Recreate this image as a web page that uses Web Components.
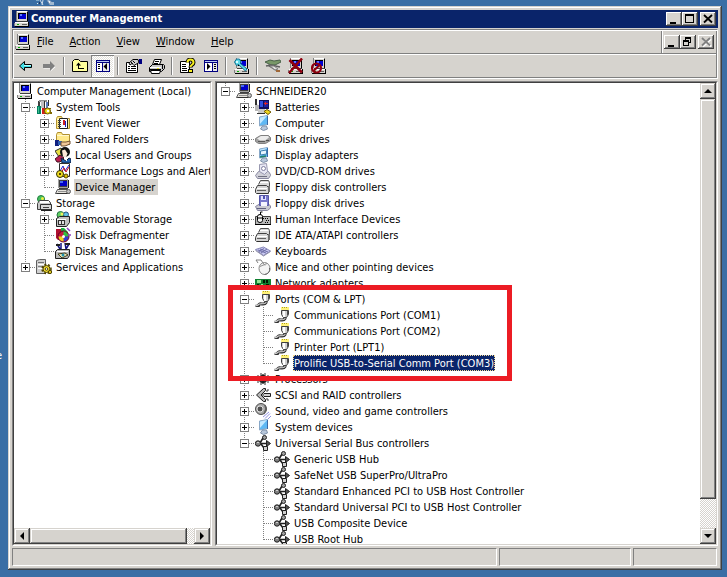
<!DOCTYPE html>
<html lang="en">
<head>
<meta charset="utf-8">
<title>Computer Management</title>
<style>
html,body{height:100%;margin:0}
body{background:#3a6ea5;color:#000;font:11px/16px "DejaVu Sans Condensed","DejaVu Sans",sans-serif;
  --face:#d6d3ce;--light:#fff;--shade:#808080;--dark:#404040;--navy:#0a246a;overflow:hidden}
</style>
</head>
<body>
<desk-top>
  <app-window>
    <title-bar slot="title" text="Computer Management"></title-bar>
    <menu-bar slot="menu"></menu-bar>
    <tool-bar slot="tools"></tool-bar>
    <tree-pane slot="left" name="Console tree" scroll="x">
      <tree-item root icon="pc" label="Computer Management (Local)">
        <tree-item icon="tools" label="System Tools" state="open">
          <tree-item icon="event" label="Event Viewer" state="closed"></tree-item>
          <tree-item icon="shared" label="Shared Folders" state="closed"></tree-item>
          <tree-item icon="users" label="Local Users and Groups" state="closed"></tree-item>
          <tree-item icon="perf" label="Performance Logs and Alerts" state="closed"></tree-item>
          <tree-item icon="device" label="Device Manager" selected="idle"></tree-item>
        </tree-item>
        <tree-item icon="storage" label="Storage" state="open">
          <tree-item icon="removable" label="Removable Storage" state="closed"></tree-item>
          <tree-item icon="defrag" label="Disk Defragmenter"></tree-item>
          <tree-item icon="diskmgmt" label="Disk Management"></tree-item>
        </tree-item>
        <tree-item icon="services" label="Services and Applications" state="closed"></tree-item>
      </tree-item>
    </tree-pane>
    <tree-pane slot="right" name="Devices" scroll="y">
      <tree-item icon="device" label="SCHNEIDER20" state="open">
        <tree-item icon="battery" label="Batteries" state="closed"></tree-item>
        <tree-item icon="monitor" label="Computer" state="closed"></tree-item>
        <tree-item icon="disk" label="Disk drives" state="closed"></tree-item>
        <tree-item icon="display" label="Display adapters" state="closed"></tree-item>
        <tree-item icon="dvd" label="DVD/CD-ROM drives" state="closed"></tree-item>
        <tree-item icon="ctrl" label="Floppy disk controllers" state="closed"></tree-item>
        <tree-item icon="floppy" label="Floppy disk drives" state="closed"></tree-item>
        <tree-item icon="hid" label="Human Interface Devices" state="closed"></tree-item>
        <tree-item icon="ctrl" label="IDE ATA/ATAPI controllers" state="closed"></tree-item>
        <tree-item icon="keyboard" label="Keyboards" state="closed"></tree-item>
        <tree-item icon="mouse" label="Mice and other pointing devices" state="closed"></tree-item>
        <tree-item icon="net" label="Network adapters" state="closed"></tree-item>
        <tree-item icon="port" label="Ports (COM &amp; LPT)" state="open">
          <tree-item icon="port" label="Communications Port (COM1)"></tree-item>
          <tree-item icon="port" label="Communications Port (COM2)"></tree-item>
          <tree-item icon="port" label="Printer Port (LPT1)"></tree-item>
          <tree-item icon="port" label="Prolific USB-to-Serial Comm Port (COM3)" selected="active"></tree-item>
        </tree-item>
        <tree-item icon="cpu" label="Processors" state="closed"></tree-item>
        <tree-item icon="scsi" label="SCSI and RAID controllers" state="closed"></tree-item>
        <tree-item icon="sound" label="Sound, video and game controllers" state="closed"></tree-item>
        <tree-item icon="monitor" label="System devices" state="closed"></tree-item>
        <tree-item icon="usb" label="Universal Serial Bus controllers" state="open">
          <tree-item icon="usb" label="Generic USB Hub"></tree-item>
          <tree-item icon="usb" label="SafeNet USB SuperPro/UltraPro"></tree-item>
          <tree-item icon="usb" label="Standard Enhanced PCI to USB Host Controller"></tree-item>
          <tree-item icon="usb" label="Standard Universal PCI to USB Host Controller"></tree-item>
          <tree-item icon="usb" label="USB Composite Device"></tree-item>
          <tree-item icon="usb" label="USB Root Hub"></tree-item>
        </tree-item>
      </tree-item>
      <callout-frame slot="overlay"></callout-frame>
    </tree-pane>
    <status-bar slot="status"></status-bar>
  </app-window>
</desk-top>
<script>
const R=(x,y,w,h,f)=>`<rect x="${x}" y="${y}" width="${w}" height="${h}" fill="${f}"/>`;
const P=(d,f,s,w=1)=>`<path fill-rule="evenodd" d="${d}" fill="${f||'none'}"${s?` stroke="${s}" stroke-width="${w}"`:''}/>`;
const C=(x,y,r,f,s)=>`<circle cx="${x}" cy="${y}" r="${r}" fill="${f}"${s?` stroke="${s}"`:''}/>`;
const PC=R(2,0,12,10,'#808080')+R(3,1,11,9,'#d6d3ce')+R(3,0,10,1,'#fff')+R(13,1,1,10,'#000')+R(4,2,8,6,'#000')+R(5,3,7,5,'#0000d0')+R(6,3,2,2,'#5a7bff')
  +R(3,10,11,1,'#404040')+R(1,11,13,4,'#d6d3ce')+R(1,11,13,1,'#fff')+R(0,12,1,3,'#808080')+R(14,11,1,4,'#000')+R(1,15,14,1,'#000')+R(3,13,2,1,'#00b000')+R(8,13,5,1,'#606060');
const DEV=R(3,0,10,9,'#a0a0a0')+R(4,0,8,1,'#dcdcdc')+R(4,1,8,7,'#404040')+R(5,2,7,5,'#0000c8')+R(5,2,3,2,'#4a6cf0')+R(13,1,1,8,'#202020')+R(4,9,9,1,'#404040')
  +P('M2.5 10.5h10l2 4H.5z','#e4e2dc','#505050')+R(3,12,8,1,'#909090')+R(2,14,12,1,'#303030')+C(13.5,12.5,2,'#c0c0c0','#606060');
const FOLD=P('M1.5 13.5v-10l1-2h4l1 2h7v10z','#ffe98a','#b09030')+R(2,4,12,1,'#fff8d0');
const MON=P('M4.5 2l8-1.500v9l-8 1.500z','#5eb8f4','#88a8c8')+P('M5 2.500l7-1.500-7 8z','#c4e8ff')+P('M12.500 1v9','','#3868a8')+P('M7.500 11h4l1 3-4 1.500-3-1.500z','#b8c8dc','#7f90a8');
const CTRL=P('M3.5 5.500l2-4h8l1 2v4h-2','#d8d8d8','#505050')+R(5,3,8,1,'#fff')+P('M.5 10.500l2-4h9l2 2v6h-12l-1-1z','#d4d4d4','#404040')+R(2,9,10,1,'#fff')+R(2,11,9,1,'#606060')+R(13,7,2,6,'#707070')+R(2,14,11,1,'#303030');
const SHADES={
pc:PC,device:DEV,
tools:R(2,2,2,7,'#404040')+R(1,7,4,8,'#008060')+R(2,8,1,6,'#40c090')+R(3,1,8,2,'#909090')+R(5,2,3,7,'#c0c0c0')+R(8,2,1,7,'#303030')+R(6,9,3,6,'#d02020')+R(9,9,1,6,'#600000')+R(10,3,2,6,'#6080c0')+R(12,1,1,6,'#303030')+C(11.5,12,3,'#f0dc20','#6a5800')+R(11,11,2,2,'#fff')+R(14,13,2,2,'#806800')+R(13,9,2,1,'#806800'),
event:FOLD+R(5,3,8,10,'#fff')+P('M4.5 3.5h8v10h-8z','none','#202020')+R(3,5,3,1,'#404040')+R(3,7,3,1,'#404040')+R(3,9,3,1,'#404040')+R(3,11,3,1,'#404040')+R(8,5,2,5,'#d02020')+R(10,6,1,6,'#2020c0'),
shared:FOLD+R(0,9,4,6,'#102080')+R(3,10,4,4,'#3060b0')+P('M6 11h5l4-1v3l-5 2H6z','#f0c898','#705030'),
users:P('M0 4l6-3 3 6-5 3z','#e8e040','#303030')+C(10,5,5,'#101010')+P('M7 3.500l3-1 2.500 4-1.500 4-3-1z','#fce8d8')+P('M0 12l5-4 4 3-4 4H2z','#b82050','#401020')+P('M6 11l5 3 3-3 2 1v4H7z','#2060b0','#102040')+P('M9 11l3 3','','#fff'),
perf:P('M4.5.5h10v13h-10z','#fff','#303030')+P('M5 8l3-5 2 5 4-6','','#2020d0')+P('M6 10l3-5 2 4 3-5','','#d01020')+C(5,11,3.5,'#f0dc20','#303000')+R(4,10,2,2,'#504000')+C(11,13,2,'#d8c000','#504000'),
storage:C(5,4,3.5,'#48c060','#208040')+C(6.500,3.500,1.500,'#f0f040')+P('M1.500 8.500l2-3h9l2 2v7h-13z','#c8c8c8','#404040')+R(4,6,9,2,'#fff')+P('M4.500 9.500h11v5h-11z','#d8d8d8','#303030')+R(7,12,6,1,'#404040')+R(5,15,11,1,'#202020'),
removable:C(5.500,4,3.5,'#60d060','#207040')+C(11,3.500,2.500,'#60c0e0','#205080')+C(7,3,1.500,'#f0f060')+P('M1.5 7.5l3-2h10v6l-3 4h-10z','#c0c0c0','#202020')+R(3,9,7,5,'#303030')+R(4,10,2,3,'#e0e0e0')+R(7,10,2,3,'#e0e0e0')+R(2,8,9,1,'#fff'),
defrag:P('M1 2h5v11H3L1 11z','#b01030')+P('M6 1h3l4 4v4H6z','#20b040')+C(8.500,9.500,5.500,'#c81840','#600020')+P('M8.500 9.500V4.500a5 5 0 0 1 5 5z','#30c040')+P('M8.500 9.500h5a5 5 0 0 1-5 5z','#3040d0')+P('M8.500 9.500v5a5 5 0 0 1-5-5z','#f0d020')+C(8.500,9.500,1.5,'#fff')+P('M12 1l3 3M13 8h3','','#9040c0',1.500),
diskmgmt:P('M2 1l3 5M6 0v6M10 0l1 6M14 1l-3 5','','#101080',1.5)+R(1,1,4,2,'#202020')+R(10,0,5,2,'#202020')+P('M.5 8.5l2-2h12v6l-2 3h-12z','#b8b8b8','#202020')+R(2,8,11,1,'#fff')+P('M3 11l4 4 6-3-3-2z','#f0e8b0','#404020')+C(8,12,1.5,'#2090b0'),
services:P('M.5 1.5l3-1h6v14h-9z','#d0d0d0','#606060')+R(2,3,6,1,'#707070')+R(2,5,6,1,'#fff')+R(2,7,6,1,'#808080')+R(2,9,4,1,'#fff')+`<circle cx="10.500" cy="10" r="3.500" fill="#f0dc30" stroke="#504400"/><circle cx="10.500" cy="10" r="4.500" fill="none" stroke="#504400" stroke-width="1.500" stroke-dasharray="2 1.700"/>`+C(10.5,10,1.3,'#fff','#504400')+C(14,13,1.700,'#d8c420','#504400'),
battery:P('M1 0v6l3 2v5h6','','#303030',2)+R(0,6,5,6,'#b8b8b8')+R(4,1,10,9,'#101060')+R(5,2,3,6,'#3050e0')+R(9,2,4,6,'#2020a0')+R(9,4,4,1,'#e02020')+R(10,3,1,3,'#e02020')+R(3,10,7,4,'#c8c8c8')+R(2,14,8,1,'#303030')+P('M9 12.500l3-2 4 2.500-3 2.500z','#f0d820','#705800'),
monitor:MON,
disk:P('M.5 7.500l5-3h8l2 2v3l-5 3h-7l-3-2z','#a0a0a0','#808080')+P('M2 7.500l4-2.500h7l1 1.500-4 3H5z','#ececec')+R(3,10,7,1,'#585858')+R(11,9,3,1,'#505050'),
display:MON+P('M5.500 4l6-1v4l-6 1z','#e8f6ff','#4080b0')+P('M5 10l6-1','','#208068',1.500),
dvd:P('M.5 12.500l3-4h10l2 3v1l-2 3h-11z','#d0d0d8','#8888a0')+P('M4.500 1.500l7-1 1 8-3 3-5-3z','#e8e8f4','#9898b0')+C(8.500,5.500,2,'#fff','#8080a0')+R(3,13,9,1,'#707080'),
ctrl:CTRL,
floppy:P('M.5 11.500l4-2.500h9l2 2v2l-3 2.500h-10z','#c8c8d0','#8888a0')+P('M4.500.500h9v10h-9z','#7878cc','#5858a8')+R(6,1,5,4,'#e0e0ff')+R(8,1,2,3,'#5050b0')+R(6,7,6,4,'#f4f4ff')+R(2,13,9,1,'#606080'),
hid:P('M.5 5.5h15v8H.5z','#b8b8b8','#404040')+R(8,7,1,1,'#000')+R(10,7,1,1,'#000')+R(12,7,1,1,'#000')+R(11,9,1,1,'#000')+R(13,9,1,1,'#000')+R(10,11,1,1,'#000')+R(12,11,1,1,'#000')+R(0,13,16,1,'#000')+P('M2.500 5.500q0-2 2.500-2t2.500 2v4q0 2-2.500 2t-2.500-2z','#f4f4f4','#000')+P('M5.500 4V1h2M3 7h4','','#000'),
keyboard:P('M.5 6.500l8-2.500 7 4-7 4.500z','#c8c8f0','#8888b8')+P('M3 7l8 3M5 6l8 3M6 10l6-4M4 8.500l5-3','','#7070a8')+P('M.5 7.500l8 5.500 7-4.500','','#9090a8'),
mouse:P('M3 4L1 1h5l2 3','','#808080')+`<ellipse cx="9.500" cy="9.500" rx="5.500" ry="6" fill="#f4f4f4" stroke="#888"/>`+P('M5 7.500l7-3M8 4l2 2.500','','#909090')+P('M14.500 9c1 4-2 6-5 6.500','','#606060'),
net:R(0,4,16,9,'#108030')+R(2,5,4,3,'#90e090')+R(8,5,2,3,'#001800')+R(11,5,2,3,'#001800')+R(2,9,2,3,'#002000')+R(6,9,2,3,'#90e090')+R(11,9,3,3,'#002000'),
port:P('M11 9v2.500q-1 2-4 1.500-3 -.5-3 .5 0 2-3.500 1.800','','#303030',3)+P('M11 9v2.500q-1 1.500-4 1.200-3.500 0-3.500 1-.5 1-3 1','','#c8c8c8',1.200)+R(7,0,8,3,'#fff27a')+R(8,0,1,1,'#b0a020')+R(10,0,1,1,'#b0a020')+R(12,0,1,1,'#b0a020')+P('M7.5 3.5h7v4l-2 3h-3l-2-3z','#d0d0d0','#404040')+R(9,4,2,6,'#fff')+R(13,4,1,4,'#505050'),
cpu:P('M8 3l7 5-7 5-7-5z','#202020')+P('M3 4v8M6 2v12M10 2v12M13 4v8','','#303030'),
scsi:P('M8.500 1.500L1.500 8l7 6.500h2v-2L6 8l4.500-4.500v-2z','#b8b8b8','#202020')+P('M9 6.5h6.500v3H9L7.500 8z','#d0d0d0','#202020')+P('M11 4h2v-2M11 12h2v2','','#404040'),
sound:C(6,6,5.500,'#a8a8a8','#505050')+C(5,6,3,'#505050','#e0e0e0')+P('M10 2l1 4-2 5','','#606060',1.500)+P('M8 14l6-5M10 15.500l5-5M13 16l3-3','','#9090e0'),
usb:P('M2 8.5h11M5 8l3-5h2M6 9l3 4h2','','#202020',1.6)+C(3,8.5,2.700,'#808080','#202020')+R(2,7,2,1,'#d0d0d0')+C(9.500,2.500,2,'#a0a0a0','#202020')+P('M8.500 11.500h4v4h-4z','#d0d0d0','#202020')+P('M11.500 5.5l4 3-4 3z','#505050','#202020'),
back:P('M1.500 8l5-4.500v3h7v3h-7v3z','#40e0e8','#000')+R(6,7,7,1,'#b0ffff'),
fwd:P('M14.500 9L9.500 4.500v3H2.500v3h7v3z','#fff')+P('M14 8L9 3v3H2v4h7v3z','#808080'),
up:P('M.5 13.500v-10l2-2h4l2 2h7v10z','#ffff9c','#000')+P('M4 7.500l2.500-3 2.500 3zM6 7h1v4h5v-1H7z','#000')+R(6,7,1,4,'#000')+R(6,10,6,1,'#000'),
tree:R(1,2,14,12,'#000080')+R(2,5,5,8,'#fff')+R(8,5,6,8,'#e8e8e8')+R(2,3,12,1,'#b8c8f0')+R(3,6,2,1,'#000')+R(3,8,2,1,'#000')+R(3,10,2,1,'#000')+P('M12 5v7L8.500 8.500z','#000'),
action:R(1,2,14,12,'#000080')+R(2,5,7,8,'#fff')+R(10,5,4,8,'#e8e8e8')+R(2,3,12,1,'#b8c8f0')+R(11,6,2,1,'#000')+R(11,8,2,1,'#000')+R(11,10,2,1,'#000')+P('M4 5v7l3.500-3.500z','#000'),
props:P('M.5 4.500h11v10H.5z','#fff','#000')+R(2,8,2,1,'#000')+R(5,8,5,1,'#000')+R(2,10,2,1,'#000')+R(5,10,5,1,'#000')+R(2,12,8,1,'#000')+P('M3 5l4-3.500 5 0 1 3-5 3-2-2-2 1.500z','#d0d0d0','#000')+R(13,1,3,5,'#000080')+P('M5 4l2 2M7 3l2 2','','#000'),
print:P('M3.500 6.500l2-5h7l-2 5z','#fff','#000')+R(6,3,4,1,'#000')+R(5,5,4,1,'#000')+P('M.5 9.500l3-3h11l1 1v3l-3 3H.5z','#c8c8c8','#000')+R(1,9,11,1,'#fff')+R(1,11,11,1,'#000')+P('M1.500 12.500h10l-1 3h-8z','#fff','#000')+R(13,7,1,4,'#000')+R(8,10,2,1,'#e0d820'),
help:P('M.500 3.500h9v11h-9z','#fff','#000')+R(2,6,4,1,'#000')+R(2,8,4,1,'#000')+R(2,10,5,1,'#000')+R(2,12,5,1,'#000')+P('M7.500 4.500c0-4 6-4 6 0 0 2.500-3 2-3 5','','#000',4)+P('M7.500 4.500c0-4 6-4 6 0 0 2.500-3 2-3 4.500','','#f8f020',2)+R(8,11,5,4,'#000')+R(9,12,3,2,'#f8f020'),
scan:PC+P('M0.500 4l2-3 3 0 1.500 3-1 1 7 6-1.500 2-7-6.500-2 1z','#60d8e8','#107090')+R(2,3,2,2,'#d8ffff'),
update:P('M0 4l5-2 4 1 6-1 1 2-6 3-4 0z','#789868','#486048')+P('M1 8l5-1 9 2M3 7l8 5','','#606060',1.6)+P('M5 8l5 4 3-1-4-3z','#e0e0e0','#808080')+R(11,12,4,2,'#a06838'),
uninstall:PC+P('M1.500 2l12.500 12.500M14 .500L1 15','','#900010',2.6),
disable:PC+`<circle cx="5.500" cy="10" r="4.500" fill="none" stroke="#900010" stroke-width="2.200"/>`+P('M2.500 13l6-6','','#900010',2.200),
arrow:P('M8 6l4 4H4z','#000'),
wmin:R(4,11,6,2,'#000'),
wmax:P('M3 3h9v9H3zM4 5v6h7V5z','#000'),
wclose:P('M4 4l8 7.500M12 4l-8 7.500','','#000',1.800),
wclosed:P('M5 5l8 7.500M13 5l-8 7.500','','#fff',1.800)+P('M4 4l8 7.500M12 4l-8 7.500','','#808080',1.800),
wrest:P('M5 3h6v6H9V8h1V5H6v1H5z','#000')+P('M3 6h6v6H3zM4 8v3h4V8z','#000')
};
const base='*,:host{box-sizing:border-box}:host([hidden]){display:none}button{font:inherit;color:inherit;padding:0;border:0;background:none;border-radius:0}';
const define=(name,css,html,ready)=>customElements.define(name,class extends HTMLElement{
  connectedCallback(){
    if(this.shadowRoot)return;
    this.attachShadow({mode:'open'}).innerHTML=`<style>${base}${css}</style>`+(typeof html==='function'?html(this):html);
    ready&&ready(this,this.shadowRoot);
  }
});

define('pixel-icon',':host{display:block;flex:none;width:16px;height:16px}svg{display:block;width:100%;height:100%}',
  e=>`<svg viewBox="0 0 16 16" aria-hidden="true">${SHADES[e.getAttribute('name')]||''}</svg>`);

define('desk-top',`:host{display:flex;position:relative;height:100vh;padding:6px 5px 7px 8px;overflow:hidden}
  ::slotted(app-window){flex:1;min-width:0}
  .strip{position:absolute;left:36px;top:0;width:20px;height:6px}
  .tag{position:absolute;left:-4px;top:348px;color:#fff}`,
  `<svg class="strip" viewBox="0 0 20 6" aria-hidden="true">${R(0,0,3,1,'#7fa8c8')+R(1,3,1,1,'#e8f0f0')+R(3,2,1,2,'#203860')+P('M4 0l3 5M7 0l-1 5','','#c8d8e8')+P('M11 0l3 5 1-4','#e8f0f8','#7890b0')+R(14,2,4,3,'#9fb8d0')}</svg><span class="tag">e</span><slot></slot>`);

define('app-window',`:host{display:grid;grid-template:18px 1px auto 2px minmax(0,1fr) 2px 18px / minmax(0,1fr);padding:4px;background:var(--face);
    box-shadow:inset -1px -1px var(--dark),inset 1px 1px var(--face),inset -2px -2px var(--shade),inset 2px 2px var(--light)}
  .rebar{grid-row:3;display:grid;border:1px solid;border-color:var(--shade) var(--light) var(--light) var(--shade);box-shadow:inset 1px 1px var(--light),inset -1px -1px var(--shade);padding:1px}
  .rule{height:2px;background:linear-gradient(var(--shade) 50%,var(--light) 50%)}
  main{grid-row:5;display:grid;grid-template-columns:200px minmax(0,1fr);gap:3px;min-height:0}
  slot[name=status]::slotted(*){grid-row:7}`,
  `<slot name="title"></slot><div class="rebar"><slot name="menu"></slot><div class="rule"></div><slot name="tools"></slot></div><main><slot name="left"></slot><slot name="right"></slot></main><slot name="status"></slot>`);

define('caption-button',`:host{display:block;width:16px;height:14px}
  button{display:block;width:16px;height:14px;background:var(--face);box-shadow:inset -1px -1px var(--dark),inset 1px 1px var(--light),inset -2px -2px var(--shade)}
  pixel-icon{margin:-1px 0}`,
  e=>`<button aria-label="${e.getAttribute('label')}"><pixel-icon name="${e.getAttribute('icon')}"></pixel-icon></button>`);

define('title-bar',`:host{display:flex;align-items:center;height:18px;padding:0 2px;background:var(--navy);color:#fff}
  h1{flex:1;margin:0;padding-left:1px;font:bold 11px/18px "DejaVu Sans Condensed","DejaVu Sans",sans-serif}
  .pair{display:flex;margin-right:2px}`,
  e=>`<pixel-icon name="pc"></pixel-icon><h1>${e.getAttribute('text')}</h1><div class="pair"><caption-button label="Minimize" icon="wmin"></caption-button><caption-button label="Maximize" icon="wmax"></caption-button></div><caption-button label="Close" icon="wclose"></caption-button>`);

define('menu-bar',`:host{display:flex;height:22px}
  nav{display:flex;flex:1;align-items:center;padding-left:1px}
  nav button{padding:0 8px;height:20px;line-height:20px}
  nav pixel-icon{margin-right:-2px}
  .mdi{display:flex;align-items:center;gap:2px;padding:0 2px;border-left:1px solid var(--shade);box-shadow:inset 1px 0 var(--light)}
  .pair{display:flex}`,
  `<nav aria-label="Menu"><pixel-icon name="pc"></pixel-icon>${['File','Action','View','Window','Help'].map(t=>`<button><u>${t[0]}</u>${t.slice(1)}</button>`).join('')}</nav>
  <div class="mdi"><div class="pair"><caption-button label="Minimize child window" icon="wmin"></caption-button><caption-button label="Restore child window" icon="wrest"></caption-button></div><caption-button label="Close child window" icon="wclosed"></caption-button></div>`);

define('tool-bar',`:host{display:flex;height:22px}
  button{width:23px;height:22px;display:grid;place-items:center}
  button[aria-pressed=true]{background:repeating-conic-gradient(#fff 0 25%,#e2e0da 0 50%) 0 0/2px 2px;box-shadow:inset 1px 1px var(--shade),inset -1px -1px var(--light)}
  i{width:2px;margin:2px 3px;background:linear-gradient(90deg,var(--shade) 50%,var(--light) 50%)}`,
  [['back','Back'],['fwd','Forward'],0,['up','Up one level'],['tree','Show/Hide console tree',1],0,['props','Properties'],['print','Print'],0,['help','Help'],['action','Show/Hide action pane'],0,['scan','Scan for hardware changes'],0,['update','Update driver'],['uninstall','Uninstall'],['disable','Disable']]
  .map(b=>b?`<button aria-label="${b[1]}"${b[2]?' aria-pressed="true"':''}><pixel-icon name="${b[0]}"></pixel-icon></button>`:'<i></i>').join(''));

define('scroll-bar',`:host{display:flex;background:repeating-conic-gradient(#fff 0 25%,var(--face) 0 50%) 0 0/2px 2px}
  :host([axis=y]){flex-direction:column;width:16px}:host([axis=x]){height:16px}
  button,.thumb{background:var(--face);box-shadow:inset -1px -1px var(--dark),inset 1px 1px var(--face),inset -2px -2px var(--shade),inset 2px 2px var(--light)}
  button{flex:none;width:16px;height:16px}
  :host([axis=x]) .a{transform:rotate(-90deg)}:host([axis=x]) .b{transform:rotate(90deg)}:host([axis=y]) .b{transform:rotate(180deg)}
  :host([axis=y]) .thumb{flex:400}:host([axis=y]) .rest{flex:29}
  :host([axis=x]) .thumb{flex:157}:host([axis=x]) .rest{flex:7}`,
  `<button aria-label="Scroll back"><pixel-icon class="a" name="arrow"></pixel-icon></button><div class="thumb"></div><div class="rest"></div><button aria-label="Scroll forward"><pixel-icon class="b" name="arrow"></pixel-icon></button>`);

define('tree-pane',`:host{display:flex;min-width:0;min-height:0;background:#fff;border:1px solid;border-color:var(--shade) var(--light) var(--light) var(--shade)}
  .in{display:flex;flex:1;min-width:0;border:1px solid;border-color:var(--dark) var(--face) var(--face) var(--dark)}
  :host([scroll=x]) .in{flex-direction:column}
  .view{position:relative;flex:1;min-width:0;min-height:0;overflow:hidden}
  :host([scroll=x]) .view{padding-left:3px}`,
  e=>`<div class="in"><div class="view" role="tree" aria-label="${e.getAttribute('name')}"><slot></slot><slot name="overlay"></slot></div><scroll-bar axis="${e.getAttribute('scroll')}"></scroll-bar></div>`);

define('tree-item',`:host{display:grid;grid-template-columns:19px minmax(0,1fr)}
  :host([root]){grid-template-columns:minmax(0,1fr)}:host([root]) .branch{display:none}
  .branch{padding:4px 0 0 4px;background:repeating-linear-gradient(90deg,#808080 0 1px,transparent 1px 2px) 9px 8px/10px 1px no-repeat,linear-gradient(#808080 50%,transparent 50%) 8px 0/1px 2px repeat-y}
  :host(:last-of-type) .branch{height:9px}
  .branch button{display:block;width:9px;height:9px;border:1px solid #808080;
    background:linear-gradient(#000,#000) 1px 3px/5px 1px no-repeat,linear-gradient(#000,#000) 3px 1px/1px 5px no-repeat,#fff}
  .branch button[aria-expanded=true]{background:linear-gradient(#000,#000) 1px 3px/5px 1px no-repeat,#fff}
  .row{display:flex;height:16px;gap:3px;white-space:nowrap}
  .label{padding:0 3px 0 1px;line-height:17px}
  :host([selected=idle]) .label{background:var(--face)}
  :host([selected=active]) .label{background:var(--navy);color:#fff;outline:1px dotted #f5db95;outline-offset:-1px;padding-right:1px}
  .kids[hidden]{display:none}`,
  e=>{const s=e.getAttribute('state');return `<div class="branch">${s?`<button aria-label="Toggle ${e.getAttribute('label').replace('&','&amp;')}" aria-expanded="${s==='open'}"></button>`:''}</div><div><div class="row"><pixel-icon name="${e.getAttribute('icon')}"></pixel-icon><span class="label"></span></div><div class="kids" role="group"><slot></slot></div></div>`},
  (e,r)=>{
    e.setAttribute('role','treeitem');
    r.querySelector('.label').textContent=e.getAttribute('label');
    const b=r.querySelector('.branch button');
    if(b)b.onclick=()=>{const open=b.getAttribute('aria-expanded')!=='true';b.setAttribute('aria-expanded',open);r.querySelector('.kids').hidden=!open};
  });

define('callout-frame',':host{position:absolute;left:11px;top:202px;width:284px;height:96px;border:5px solid #ec1c24;pointer-events:none}','');

define('status-bar',`:host{display:grid;grid-template-columns:minmax(0,1fr) 132px 84px;gap:2px;padding-right:1px}
  div{border:1px solid;border-color:var(--shade) var(--light) var(--light) var(--shade)}`,'<div></div><div></div><div></div>');
</script>
</body>
</html>
